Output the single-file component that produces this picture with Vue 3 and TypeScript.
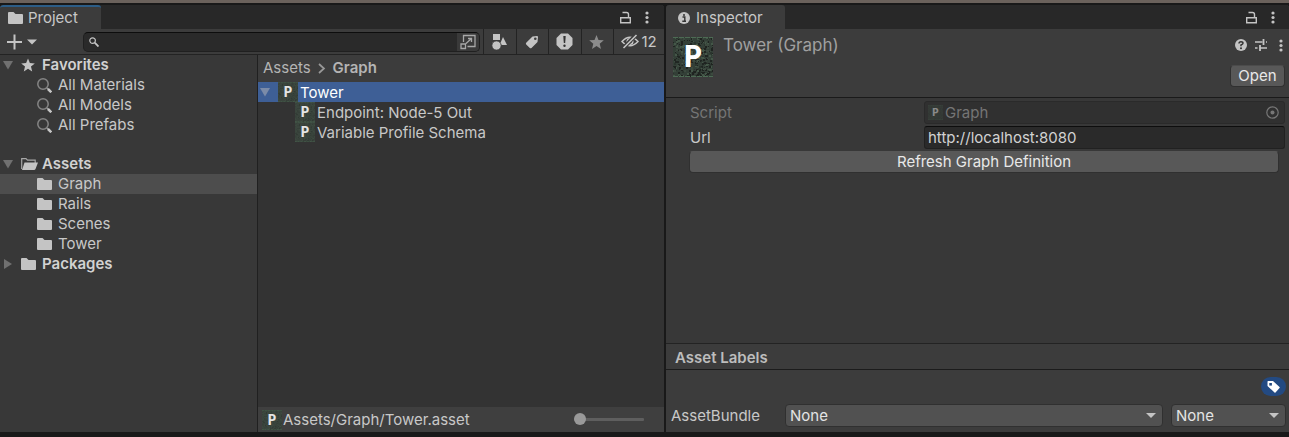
<script setup lang="ts">
import { ref, defineComponent, h } from 'vue'

interface TreeItem { label: string; kind: 'star' | 'search' | 'folder' | 'open'; root?: boolean; expanded?: boolean; selected?: boolean; gap?: boolean }

const tree: TreeItem[] = [
  { label: 'Favorites', kind: 'star', root: true, expanded: true },
  { label: 'All Materials', kind: 'search' },
  { label: 'All Models', kind: 'search' },
  { label: 'All Prefabs', kind: 'search' },
  { label: 'Assets', kind: 'open', root: true, expanded: true, gap: true },
  { label: 'Graph', kind: 'folder', selected: true },
  { label: 'Rails', kind: 'folder' },
  { label: 'Scenes', kind: 'folder' },
  { label: 'Tower', kind: 'folder' },
  { label: 'Packages', kind: 'folder', root: true, expanded: false },
]
const children = ['Endpoint: Node-5 Out', 'Variable Profile Schema']
const query = ref('')
const url = ref('http://localhost:8080')
const zoom = ref(0)

// Deterministic speckles for the mossy asset thumbnail
let seed = 7
const rand = () => (seed = (seed * 16807) % 2147483647) / 2147483647
const tones = ['#1f2421', '#2a332d', '#3d4c41', '#465a4b', '#1d211e']
const speckles = Array.from({ length: 420 }, () => ({
  x: Math.floor(rand() * 40), y: Math.floor(rand() * 40), w: 1 + Math.floor(rand() * 2), c: tones[Math.floor(rand() * 5)],
}))

const Thumb = defineComponent({
  props: { small: Boolean },
  setup(props) {
    return () => h('svg', { viewBox: '0 0 40 40', 'aria-hidden': 'true' }, [
      h('rect', { width: 40, height: 40, fill: props.small ? '#3b463e' : '#344038' }),
      h('g', { opacity: props.small ? 0.3 : 0.9 }, speckles.map(s => h('rect', { x: s.x, y: s.y, width: s.w, height: s.w, fill: s.c }))),
      h('path', { d: 'M0 .5h40M0 39.500h40', stroke: '#4d6b54', 'stroke-dasharray': '5 1' }),
      h('text', { x: 20, y: props.small ? 29 : 30, 'text-anchor': 'middle', fill: props.small ? '#e4e4e4' : '#fff', 'font-size': props.small ? 30 : 32, 'font-weight': 700, 'font-family': '"Liberation Sans Narrow", "Roboto Condensed", "Open Sans Condensed", "Noto Sans Condensed", Lato, sans-serif' }, 'P'),
    ])
  },
})
</script>

<template>
  <div class="editor">
    <div class="scene-edge"></div>
    <main class="panels">
      <section class="project" aria-label="Project">
        <header class="tabs">
          <button class="tab active project-tab">
            <svg width="15" height="12" viewBox="0 0 15 12"><path d="M0 1q0-1 1-1h4.500l2 2H14q1 0 1 1v8q0 1-1 1H1q-1 0-1-1z" fill="#c4c4c4" /></svg>
            <span>Project</span>
          </button>
          <div class="window-tools">
            <button aria-label="Lock"><svg width="11" height="13" viewBox="0 0 11 13"><path d="M.7 6.700h9.600v5H.7zM2.500 1.500h4q2 0 2 2v3" fill="none" stroke="#c4c4c4" stroke-width="1.400" /></svg></button>
            <button aria-label="Menu"><svg width="4" height="13" viewBox="0 0 4 13" fill="#c4c4c4"><circle cx="2" cy="2" r="1.600" /><circle cx="2" cy="6.500" r="1.600" /><circle cx="2" cy="11" r="1.600" /></svg></button>
          </div>
        </header>
        <div class="toolbar">
          <button class="add" aria-label="Create">
            <svg width="31" height="16" viewBox="0 0 31 16"><path d="M1 8h15M8.500.5v15" stroke="#c4c4c4" stroke-width="2" /><path d="M21 5.500h10l-5 5z" fill="#c4c4c4" /></svg>
          </button>
          <div class="search">
            <svg class="lens" width="10" height="10" viewBox="0 0 10 10" fill="none" stroke="#c4c4c4"><circle cx="3.600" cy="3.600" r="2.800" stroke-width="1.200" /><path d="M5.700 5.700l3.800 3.800" stroke-width="1.800" /></svg>
            <input v-model="query" type="text" aria-label="Search assets" />
            <button aria-label="Open search window">
              <svg width="16" height="16" viewBox="0 0 16 16" fill="none" stroke="#a8a8a8" stroke-width="1.300"><path d="M3.500 8V1.500h11.500v11H7.500M1 10h4.500v4.500H1zM6 9.500l5.500-5M8 4.500h3.500V8" /></svg>
            </button>
          </div>
          <div class="filters">
            <button aria-label="Search by type"><svg width="16" height="18" viewBox="0 0 16 18" fill="#c4c4c4"><path d="M2 1h7v6H2zM9 11l3-7 4 8h-5z" /><circle cx="5.500" cy="12.500" r="4.600" stroke="#3c3c3c" stroke-width=".8" /></svg></button>
            <button aria-label="Search by label"><svg width="14" height="14" viewBox="0 0 14 14"><path d="M7.500 1.500L12 1q1 0 1 1l-.5 5-6 6q-1 .6-1.700 0L1.200 9.500q-.7-1 0-1.700z" fill="#c4c4c4" /><circle cx="10.300" cy="3.800" r="1.300" fill="#3c3c3c" /></svg></button>
            <button aria-label="Search by import log"><svg width="17" height="17" viewBox="0 0 17 17"><path d="M5 .5h7L16.500 5v7L12 16.500H5L.5 12V5z" fill="#c4c4c4" /><path d="M7.300 3h2.400l-.5 7H7.800z" fill="#333" /><circle cx="8.500" cy="12.800" r="1.200" fill="#333" /></svg></button>
            <button aria-label="Save search"><svg width="15" height="14" viewBox="0 0 15 14"><path d="M7.500 0l2 4.900 5.300.4-4.100 3.400 1.300 5.200-4.500-2.800-4.500 2.800 1.300-5.200L.2 5.300l5.300-.4z" fill="#8b8b8b" /></svg></button>
            <button class="hidden-count" aria-label="Hidden packages">
              <svg width="18" height="15" viewBox="0 0 18 15" fill="none" stroke="#c4c4c4"><path d="M1 7.500Q9-1 17 7.500 9 16 1 7.500z" stroke-width="1.500" /><circle cx="9" cy="7.500" r="2.800" stroke-width="1.500" /><path d="M2.500 13.800L15 1" stroke="#3c3c3c" stroke-width="4" /><path d="M2.500 14L15.500 1" stroke-width="1.600" /></svg>
              <span>12</span>
            </button>
          </div>
        </div>
        <div class="browser">
          <nav class="tree">
            <div v-for="item in tree" :key="item.label + item.kind" class="row" :class="{ root: item.root, selected: item.selected, gap: item.gap }">
              <svg v-if="item.root" class="fold" width="10" height="10" viewBox="0 0 10 10"><path :d="item.expanded ? 'M0 1h10L5 9.500z' : 'M1 0v10l8-5z'" fill="#707070" /></svg>
              <span class="kind">
                <svg v-if="item.kind === 'star'" width="14" height="14" viewBox="0 0 15 14"><path d="M7.500 0l2 4.900 5.300.4-4.100 3.400 1.300 5.200-4.500-2.800-4.500 2.800 1.300-5.200L.2 5.300l5.300-.4z" fill="#c4c4c4" /></svg>
                <svg v-else-if="item.kind === 'search'" width="15" height="15" viewBox="0 0 15 15" fill="none"><circle cx="6" cy="6" r="5.200" stroke="#858585" stroke-width="1.500" /><path d="M10 10l1.500 1.500" stroke="#999" stroke-width="1.500" /><path d="M11 11l3.300 3.300" stroke="#c4c4c4" stroke-width="2.500" /></svg>
                <svg v-else-if="item.kind === 'open'" width="17" height="12" viewBox="0 0 17 12"><path d="M.7 11V.7H5l1.500 1.500h7.700V5" fill="none" stroke="#a8a8a8" stroke-width="1.200" /><path d="M3.500 4.500H17L14.500 11q-.3 1-1.500 1H1z" fill="#c4c4c4" /></svg>
                <svg v-else width="15" height="12" viewBox="0 0 15 12"><path d="M0 1q0-1 1-1h4.500l2 2H14q1 0 1 1v8q0 1-1 1H1q-1 0-1-1z" fill="#c4c4c4" /></svg>
              </span>
              <span>{{ item.label }}</span>
            </div>
          </nav>
          <div class="contents">
            <div class="crumbs"><a href="#">Assets</a><svg width="8" height="11" viewBox="0 0 8 11"><path d="M1 1l5 4.500L1 10" fill="none" stroke="#999" stroke-width="1.700" /></svg><strong>Graph</strong></div>
            <div class="asset current">
              <svg class="fold" width="10" height="10" viewBox="0 0 10 10"><path d="M0 1h10L5 9.500z" fill="#7b8ba8" /></svg>
              <Thumb small class="thumb" /><span>Tower</span>
            </div>
            <div v-for="name in children" :key="name" class="asset child"><Thumb small class="thumb" /><span>{{ name }}</span></div>
            <footer class="status">
              <Thumb small class="thumb" /><span>Assets/Graph/Tower.asset</span>
              <input v-model.number="zoom" type="range" min="0" max="100" aria-label="Icon size" />
            </footer>
          </div>
        </div>
      </section>

      <section class="inspector" aria-label="Inspector">
        <header class="tabs">
          <button class="tab inspector-tab">
            <svg width="12" height="12" viewBox="0 0 12 12"><circle cx="6" cy="6" r="6" fill="#c4c4c4" /><path d="M4.500 5h2.300v4M4.300 9.200h3.700" fill="none" stroke="#333" stroke-width="1.400" /><circle cx="6" cy="2.900" r="1" fill="#333" /></svg>
            <span>Inspector</span>
          </button>
          <div class="window-tools">
            <button aria-label="Lock"><svg width="11" height="13" viewBox="0 0 11 13"><path d="M.7 6.700h9.600v5H.7zM2.500 1.500h4q2 0 2 2v3" fill="none" stroke="#c4c4c4" stroke-width="1.400" /></svg></button>
            <button aria-label="Menu"><svg width="4" height="13" viewBox="0 0 4 13" fill="#c4c4c4"><circle cx="2" cy="2" r="1.600" /><circle cx="2" cy="6.500" r="1.600" /><circle cx="2" cy="11" r="1.600" /></svg></button>
          </div>
        </header>
        <div class="object-head">
          <Thumb class="preview" />
          <h1>Tower (Graph)</h1>
          <div class="head-side">
            <div class="head-tools">
              <button aria-label="Help"><svg width="12" height="12" viewBox="0 0 12 12"><circle cx="6" cy="6" r="6" fill="#c4c4c4" /><path d="M4 4.500Q4 2.700 6 2.700t2 1.600Q8 5.300 6 6v1.200" fill="none" stroke="#333" stroke-width="1.500" /><circle cx="6" cy="9.200" r="1" fill="#333" /></svg></button>
              <button aria-label="Presets"><svg width="12" height="12" viewBox="0 0 12 12" fill="none" stroke="#c4c4c4"><path d="M0 3h7.500M11 3h1M0 9h2.500M5 9h7" stroke-width="1.300" /><path d="M8.500 0v6M5 6v6" stroke-width="1.800" /></svg></button>
              <button class="more" aria-label="Component menu"><svg width="4" height="13" viewBox="0 0 4 13" fill="#c4c4c4"><circle cx="2" cy="2" r="1.600" /><circle cx="2" cy="6.500" r="1.600" /><circle cx="2" cy="11" r="1.600" /></svg></button>
            </div>
            <button class="button open">Open</button>
          </div>
        </div>
        <div class="fields">
          <div class="field disabled">
            <label for="script">Script</label>
            <button id="script" class="object-field" disabled><Thumb small class="mini" /><span>Graph</span><svg width="13" height="13" viewBox="0 0 13 13"><circle cx="6.500" cy="6.500" r="5.700" fill="none" stroke="#777" stroke-width="1.200" /><circle cx="6.500" cy="6.500" r="2" fill="#777" /></svg></button>
          </div>
          <div class="field">
            <label for="url">Url</label>
            <input id="url" v-model="url" type="text" spellcheck="false" />
          </div>
          <button class="button refresh">Refresh Graph Definition</button>
        </div>
        <h2>Asset Labels</h2>
        <div class="labels">
          <button class="tag" aria-label="Add label"><svg width="13" height="12" viewBox="0 0 13 12"><path d="M1 0h5l6.500 6q.5.5 0 1L8.500 11.500q-.5.5-1 0L.5 5V.5z" fill="#fff" /><rect x="2.300" y="2" width="2.600" height="2.600" fill="#234a82" /></svg></button>
          <div class="bundle">
            <label for="bundle">AssetBundle</label>
            <div class="select wide"><select id="bundle"><option>None</option></select><svg width="10" height="5" viewBox="0 0 10 5"><path d="M0 0h10L5 5z" fill="#c4c4c4" /></svg></div>
            <div class="select"><select aria-label="AssetBundle variant"><option>None</option></select><svg width="10" height="5" viewBox="0 0 10 5"><path d="M0 0h10L5 5z" fill="#c4c4c4" /></svg></div>
          </div>
        </div>
      </section>
    </main>
  </div>
</template>

<style>
html, body { margin: 0; background: #191919; }
</style>

<style scoped>
.editor, .editor * { box-sizing: border-box; }
.editor { display: flex; flex-direction: column; min-height: 100vh; padding-bottom: 5px; background: #191919; color: #c8c8c8; font: 15px/20px Inter, "Liberation Sans", sans-serif; }
button, input, select { margin: 0; padding: 0; border: 0; background: none; color: inherit; font: inherit; outline: 0; }
svg { display: block; flex: none; }
.scene-edge { height: 3px; background: #6b625c; }
.panels { flex: 1; display: grid; grid-template-columns: minmax(0, 664fr) minmax(0, 623fr); gap: 2px; padding-top: 2px; }
.project, .inspector { display: flex; flex-direction: column; min-width: 0; background: #383838; border-radius: 3px 3px 0 0; overflow: hidden; }

.tabs { display: flex; justify-content: space-between; height: 24px; background: #282828; }
.tab { display: flex; align-items: center; gap: 5px; background: #3c3c3c; border-radius: 3px 3px 0 0; border-top: 2px solid #3c3c3c; }
.project-tab { width: 101px; padding-left: 8px; border-top-color: #2c5d87; }
.inspector-tab { width: 119px; padding-left: 12px; gap: 6px; }
.window-tools { display: flex; align-items: center; gap: 14px; padding-right: 14px; }
.project .window-tools { padding-right: 15px; }

.toolbar { display: flex; align-items: center; height: 26px; background: #3c3c3c; border-bottom: 1px solid #232323; }
.add { width: 83px; padding-left: 6px; }
.search { flex: 1; display: flex; align-items: center; height: 20px; min-width: 0; background: #2a2a2a; border: 1px solid #202020; border-top-color: #0d0d0d; border-radius: 5px; overflow: hidden; }
.search input { flex: 1; min-width: 0; }
.lens { margin: 0 6px 0 5px; }
.search button { display: flex; align-items: center; justify-content: center; width: 22px; height: 18px; background: #3a3a3a; }
.filters { display: flex; height: 25px; margin-left: 3px; }
.filters button { display: flex; align-items: center; justify-content: center; width: 33px; padding-right: 2px; border-left: 1px solid #232323; }
.filters button:nth-child(even) { width: 32px; }
.filters .hidden-count { width: 51px; gap: 2px; padding-right: 0; }

.browser { flex: 1; display: grid; grid-template-columns: 258px minmax(0, 1fr); }
.tree { border-right: 1px solid #202020; }
.row { display: flex; align-items: center; height: 20px; padding-left: 37px; }
.row.root { padding-left: 3px; font-weight: 600; color: #d2d2d2; }
.row.gap { margin-top: 19px; }
.row.selected { background: #4d4d4d; }
.kind { display: flex; align-items: center; width: 21px; }
.root .kind { margin-left: 8px; }

.contents { display: flex; flex-direction: column; min-width: 0; background: #333; }
.crumbs { display: flex; align-items: center; gap: 7px; height: 27px; padding: 0 5px 1px; background: #3c3c3c; color: #b4b4b4; }
.crumbs a { color: inherit; text-decoration: none; }
.crumbs strong { font-weight: 600; }
.thumb { width: 20px; height: 20px; }
.asset { display: flex; align-items: center; gap: 2px; height: 20px; }
.asset span { padding-top: 2px; }
.current { padding-left: 2px; background: #3e5f96; color: #fff; }
.current .fold { margin-right: 6px; }
.child { padding-left: 37px; }
.status { display: flex; align-items: center; gap: 1px; height: 25px; margin-top: auto; padding: 0 20px 0 4px; background: #3f3f3f; }
.status input { appearance: none; width: 70px; height: 12px; margin-left: auto; }
.status input::-webkit-slider-runnable-track { height: 3px; background: #5e5e5e; border-radius: 1px; }
.status input::-webkit-slider-thumb { appearance: none; width: 12px; height: 12px; margin-top: -5px; border-radius: 50%; background: #999; }

.object-head { display: flex; height: 69px; padding: 8px 4px 0 7px; background: #3c3c3c; border-bottom: 1px solid #1a1a1a; }
.preview { width: 40px; height: 40px; }
h1 { margin: -2px 0 0 10px; font-size: 17px; line-height: 20px; font-weight: 400; color: #a0a0a0; }
.head-side { display: flex; flex-direction: column; align-items: flex-end; gap: 12px; margin-left: auto; }
.head-tools { display: flex; align-items: center; gap: 8px; height: 16px; padding-right: 2px; }
.more { padding-left: 4px; }
.button { height: 22px; background: #585858; border: 1px solid #303030; border-top-color: #4b4b4b; border-radius: 4px; color: #e8e8e8; line-height: 18px; }
.open { width: 55px; }
.fields { display: flex; flex-direction: column; gap: 2px; padding: 3px 4px 8px 23px; }
.field { display: grid; grid-template-columns: 234px minmax(0, 1fr); align-items: center; padding-left: 1px; }
.field.disabled { color: #757575; }
.field input { width: 100%; height: 23px; padding: 0 3px; background: #2a2a2a; border: 1px solid #212121; border-top-color: #0d0d0d; border-radius: 3px; color: #d2d2d2; }
.object-field { display: flex; align-items: center; gap: 2px; height: 23px; padding: 0 5px 0 3px; background: #303030; border: 1px solid #2a2a2a; border-radius: 3px; }
.object-field > svg:last-child { margin-left: auto; }
.mini { width: 15px; height: 15px; opacity: .5; }
.refresh { margin-right: 6px; border-top-color: #585858; }

h2 { margin: auto 0 0; height: 27px; padding-left: 9px; border-top: 1px solid #232323; border-bottom: 1px solid #1c1c1c; background: #3c3c3c; font-size: 15px; font-weight: 600; line-height: 27px; color: #bdbdbd; }
.labels { display: flex; flex-direction: column; align-items: flex-end; gap: 8px; padding: 7px 3px 5px 5px; background: #3c3c3c; }
.tag { display: flex; align-items: center; justify-content: center; width: 25px; height: 19px; border-radius: 10px; background: #234a82; }
.bundle { display: grid; grid-template-columns: 106px minmax(0, 378fr) minmax(0, 115fr); column-gap: 8px; align-items: center; align-self: stretch; }
.select { position: relative; }
.select select { display: block; appearance: none; width: 100%; height: 23px; padding: 0 4px; border: 1px solid #303030; border-radius: 4px; background: #515151; color: #e4e4e4; }
.select svg { position: absolute; right: 7px; top: 9px; pointer-events: none; }
</style>
